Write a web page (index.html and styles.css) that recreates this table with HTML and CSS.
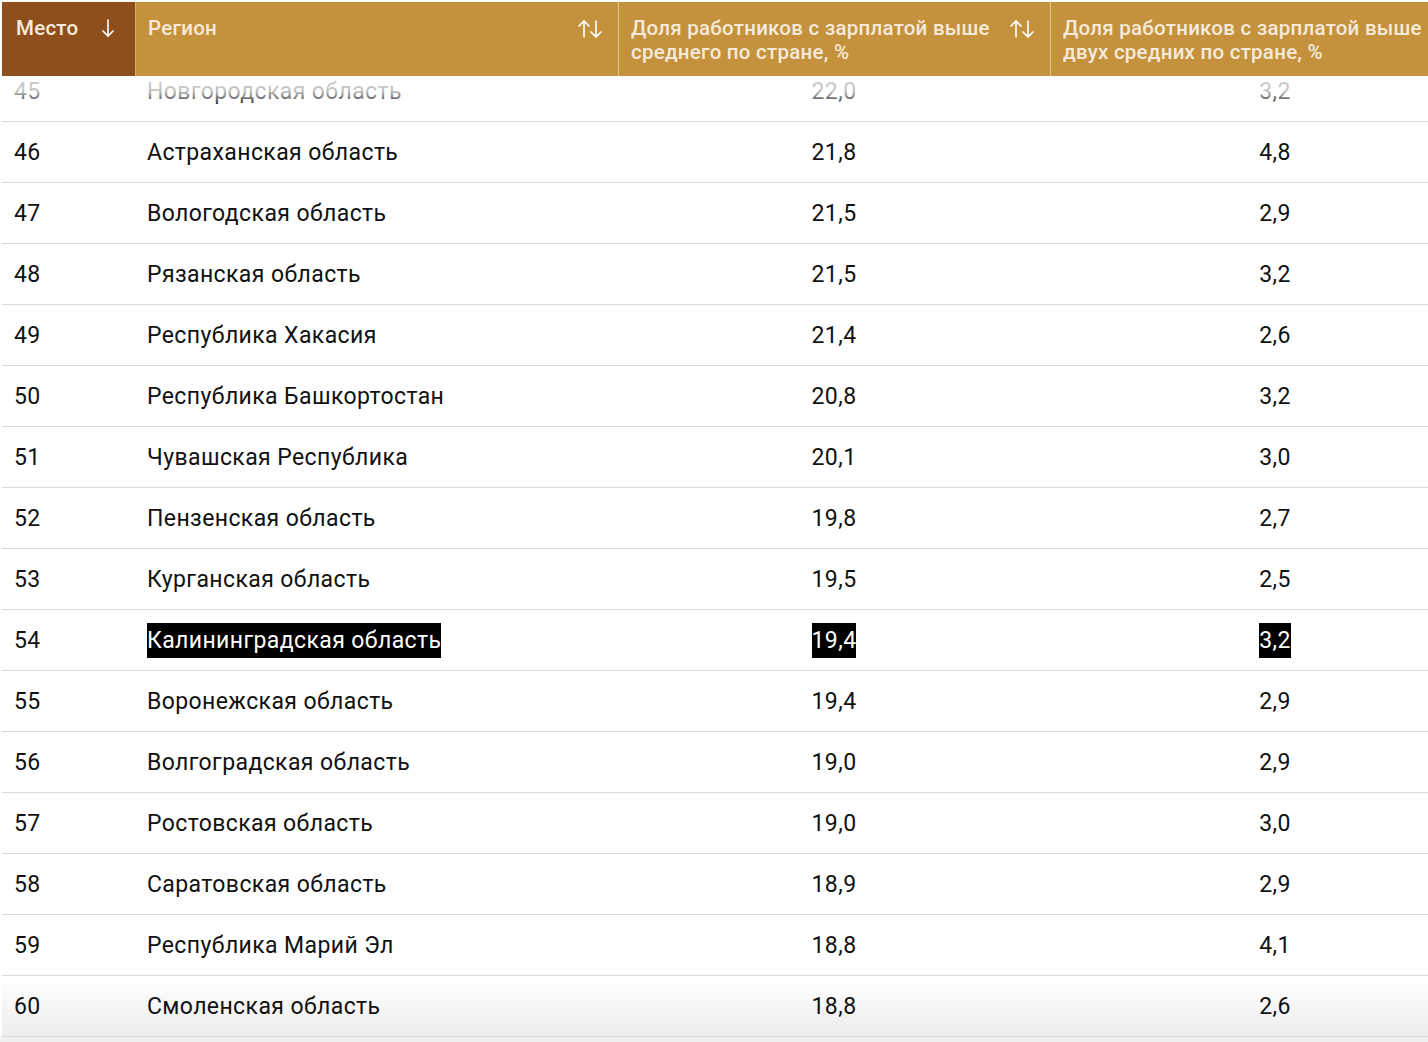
FILE: index.html
```html
<!DOCTYPE html>
<html lang="ru">
<head>
<meta charset="utf-8">
<title>Доля работников</title>
<link rel="stylesheet" href="styles.css">
</head>
<body>
<div class="page">
  <div class="table">
    <div class="thead">
      <div class="th col1 active">
        <span class="label">Место</span>
        <svg class="sort single" width="14" height="20" viewBox="0 0 14 20"><path d="M7 1.5V18M1.5 12.5L7 18L12.5 12.5" fill="none" stroke="#fff" stroke-width="1.6"/></svg>
      </div>
      <div class="th col2">
        <span class="label">Регион</span>
        <svg class="sort" width="26" height="20" viewBox="0 0 26 20"><path d="M7 18.5V2M1.5 7.5L7 2L12.5 7.5M19 1.5V18M13.5 12.5L19 18L24.5 12.5" fill="none" stroke="#fff" stroke-width="1.6"/></svg>
      </div>
      <div class="th col3">
        <span class="label">Доля работников с зарплатой выше среднего по стране, %</span>
        <svg class="sort" width="26" height="20" viewBox="0 0 26 20"><path d="M7 18.5V2M1.5 7.5L7 2L12.5 7.5M19 1.5V18M13.5 12.5L19 18L24.5 12.5" fill="none" stroke="#fff" stroke-width="1.6"/></svg>
      </div>
      <div class="th col4">
        <span class="label">Доля работников с зарплатой выше двух средних по стране, %</span>
        <svg class="sort" width="26" height="20" viewBox="0 0 26 20"><path d="M7 18.5V2M1.5 7.5L7 2L12.5 7.5M19 1.5V18M13.5 12.5L19 18L24.5 12.5" fill="none" stroke="#fff" stroke-width="1.6"/></svg>
      </div>
    </div>
    <div class="tbody">
      <div class="fade-top"></div>
      <div class="tr first"><div class="td col1">45</div><div class="td col2">Новгородская область</div><div class="td col3">22,0</div><div class="td col4">3,2</div></div>
      <div class="tr"><div class="td col1">46</div><div class="td col2">Астраханская область</div><div class="td col3">21,8</div><div class="td col4">4,8</div></div>
      <div class="tr"><div class="td col1">47</div><div class="td col2">Вологодская область</div><div class="td col3">21,5</div><div class="td col4">2,9</div></div>
      <div class="tr"><div class="td col1">48</div><div class="td col2">Рязанская область</div><div class="td col3">21,5</div><div class="td col4">3,2</div></div>
      <div class="tr"><div class="td col1">49</div><div class="td col2">Республика Хакасия</div><div class="td col3">21,4</div><div class="td col4">2,6</div></div>
      <div class="tr"><div class="td col1">50</div><div class="td col2">Республика Башкортостан</div><div class="td col3">20,8</div><div class="td col4">3,2</div></div>
      <div class="tr"><div class="td col1">51</div><div class="td col2">Чувашская Республика</div><div class="td col3">20,1</div><div class="td col4">3,0</div></div>
      <div class="tr"><div class="td col1">52</div><div class="td col2">Пензенская область</div><div class="td col3">19,8</div><div class="td col4">2,7</div></div>
      <div class="tr"><div class="td col1">53</div><div class="td col2">Курганская область</div><div class="td col3">19,5</div><div class="td col4">2,5</div></div>
      <div class="tr"><div class="td col1">54</div><div class="td col2"><mark class="hl">Калининградская область</mark></div><div class="td col3"><mark class="hl">19,4</mark></div><div class="td col4"><mark class="hl">3,2</mark></div></div>
      <div class="tr"><div class="td col1">55</div><div class="td col2">Воронежская область</div><div class="td col3">19,4</div><div class="td col4">2,9</div></div>
      <div class="tr"><div class="td col1">56</div><div class="td col2">Волгоградская область</div><div class="td col3">19,0</div><div class="td col4">2,9</div></div>
      <div class="tr"><div class="td col1">57</div><div class="td col2">Ростовская область</div><div class="td col3">19,0</div><div class="td col4">3,0</div></div>
      <div class="tr"><div class="td col1">58</div><div class="td col2">Саратовская область</div><div class="td col3">18,9</div><div class="td col4">2,9</div></div>
      <div class="tr"><div class="td col1">59</div><div class="td col2">Республика Марий Эл</div><div class="td col3">18,8</div><div class="td col4">4,1</div></div>
      <div class="tr last"><div class="td col1">60</div><div class="td col2">Смоленская область</div><div class="td col3">18,8</div><div class="td col4">2,6</div></div>
    </div>
  </div>
</div>
</body>
</html>
```

FILE: styles.css
```css
* { box-sizing: border-box; }
html, body { margin: 0; padding: 0; background: #fff; }
body { font-family: Roboto, "Noto Sans", "Liberation Sans", sans-serif; color: #111; }

.page {
  width: 1428px;
  height: 1042px;
  overflow: hidden;
  padding: 2px 0 0 2px;
  background: linear-gradient(#fff 0, #fff 1036px, #f0f0f0 1037px);
}

.table { width: 1498px; }

.thead {
  display: grid;
  grid-template-columns: 133px 483px 432px 450px;
  position: relative;
  z-index: 2;
  background: #c4913c;
}

.th {
  display: flex;
  align-items: flex-start;
  justify-content: space-between;
  padding: 14px 15px 12px 12px;
  font-size: 20.5px;
  line-height: 24px;
  font-weight: 500;
  letter-spacing: 0.25px;
  color: #f6eadb;
  border-left: 1px solid #e3c48f;
}
.th.col1 { border-left: none; background: #8e4f1d; padding-left: 14px; padding-right: 20px; }
.th.col2 { border-left-color: #d5ae77; }
.th .label { display: block; }
.th.col3 .label { max-width: 372px; }
.th.col4 .label { max-width: 372px; }
.sort { flex: none; margin-top: 3px; }
.sort.single { margin-top: 2px; }

.tbody { position: relative; z-index: 1; }

.fade-top {
  position: absolute;
  left: 0; right: 0; top: 0;
  height: 46px;
  z-index: 3;
  background: linear-gradient(rgba(255,255,255,0.88) 0, rgba(255,255,255,0.74) 30px, rgba(255,255,255,0) 46px);
  pointer-events: none;
}

.tr {
  display: grid;
  grid-template-columns: 133px 483px 432px 450px;
  height: 61px;
  align-items: center;
  border-bottom: 1px solid #d9d9d9;
  font-size: 23px;
  letter-spacing: 0.4px;
  line-height: 35px;
}
.tr.first { margin-top: -15px; }
.tr.last { background: linear-gradient(#fff, #ededed); }

.td { white-space: nowrap; }
.td.col1 { padding-left: 12px; }
.td.col2 { padding-left: 12px; }
.td.col3, .td.col4 { text-align: center; }

.hl {
  display: inline-block;
  background: #000;
  color: #fff;
  line-height: 35px;
  padding: 0;
}
```
